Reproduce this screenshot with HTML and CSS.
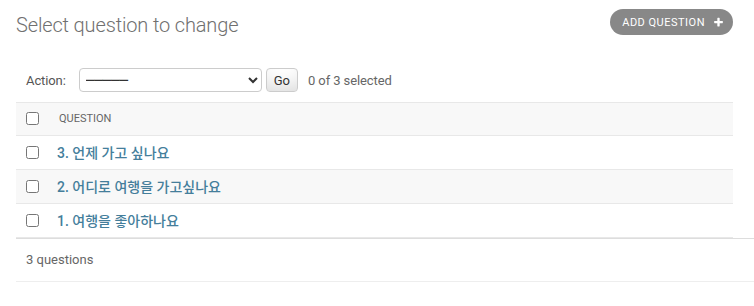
FILE: index.html
```html
<!DOCTYPE html>
<html lang="ko">
<head>
<meta charset="utf-8">
<title>Select question to change</title>
<link rel="stylesheet" href="styles.css">
</head>
<body>
<div class="content">
  <div class="head">
    <h1 class="title">Select question to change</h1>
    <a class="addlink" href="#">Add question
      <svg class="plus" width="11" height="11" viewBox="0 0 1792 1792" aria-hidden="true"><path fill="#fff" d="M1600 736v192q0 40-28 68t-68 28h-416v416q0 40-28 68t-68 28h-192q-40 0-68-28t-28-68v-416h-416q-40 0-68-28t-28-68v-192q0-40 28-68t68-28h416v-416q0-40 28-68t68-28h192q40 0 68 28t28 68v416h416q40 0 68 28t28 68z"/></svg>
    </a>
  </div>
  <div class="actions">
    <label class="action-label">Action:</label>
    <select class="action-select">
      <option>─────</option>
      <option>Delete selected questions</option>
    </select>
    <button class="go" type="button">Go</button>
    <span class="counter">0 of 3 selected</span>
  </div>
  <table class="results">
    <thead>
      <tr>
        <th class="cb-col"><input class="cb" type="checkbox"></th>
        <th class="head-col">Question</th>
      </tr>
    </thead>
    <tbody>
      <tr class="row1">
        <td class="cb-col"><input class="cb" type="checkbox"></td>
        <th class="link-col"><a href="#">3. 언제 가고 싶나요</a></th>
      </tr>
      <tr class="row2">
        <td class="cb-col"><input class="cb" type="checkbox"></td>
        <th class="link-col"><a href="#">2. 어디로 여행을 가고싶나요</a></th>
      </tr>
      <tr class="row1">
        <td class="cb-col"><input class="cb" type="checkbox"></td>
        <th class="link-col"><a href="#">1. 여행을 좋아하나요</a></th>
      </tr>
    </tbody>
  </table>
  <p class="paginator">3 questions</p>
</div>
</body>
</html>
```
FILE: styles.css
```css
html, body {
  margin: 0;
  padding: 0;
  background: #fff;
  overflow: hidden;
}
body {
  font-family: Roboto, "Noto Sans CJK KR", sans-serif;
  color: #333;
  font-size: 14px;
}
.content {
  padding: 13px 21px 0 16px;
}
.head {
  display: flex;
  justify-content: space-between;
  align-items: flex-start;
  margin-bottom: 21px;
}
.title {
  margin: 0;
  font-size: 20px;
  font-weight: 300;
  line-height: 24px;
  letter-spacing: -0.15px;
  color: #707070;
}
.addlink {
  margin-top: -4px;
  display: inline-flex;
  align-items: center;
  gap: 8px;
  height: 26px;
  padding: 0 9px 0 12px;
  box-sizing: border-box;
  background: #888;
  color: #fff;
  border-radius: 15px;
  font-size: 11px;
  font-weight: 400;
  text-transform: uppercase;
  letter-spacing: 0.5px;
  text-decoration: none;
}
.plus {
  display: block;
}
.actions {
  display: flex;
  align-items: center;
  height: 24px;
  padding: 10px;
  color: #666;
  font-size: 13px;
}
.action-label {
  color: #555;
  letter-spacing: -0.1px;
}
.action-select {
  margin-left: 13px;
  width: 183px;
  height: 24px;
  box-sizing: border-box;
  border: 1px solid #ccc;
  border-radius: 4px;
  background: #fff;
  color: #333;
  font-family: "DejaVu Sans", sans-serif;
  font-size: 14px;
  padding: 0 0 0 2px;
}
.go {
  margin-left: 4px;
  height: 24px;
  box-sizing: border-box;
  padding: 0 7px;
  border: 1px solid #ccc;
  border-radius: 4px;
  background: #fff;
  box-shadow: 0 -15px 20px -10px rgba(0, 0, 0, 0.15) inset;
  color: #333;
  font-family: Roboto, sans-serif;
  font-size: 13px;
  line-height: 1;
}
.counter {
  margin-left: 10px;
  letter-spacing: -0.1px;
}
.results {
  width: 100%;
  border-collapse: separate;
  border-spacing: 0;
}
.results thead th {
  background: #f8f8f8;
  border-top: 1px solid #e8e8e8;
  border-bottom: 1px solid #e8e8e8;
  height: 31px;
  padding-bottom: 1px;
  box-sizing: content-box;
  vertical-align: middle;
}
.cb-col {
  width: 13px;
  padding: 0 10px;
  vertical-align: middle;
}
.cb {
  display: block;
  margin: 0;
  width: 13px;
  height: 13px;
}
.head-col {
  padding: 0 10px;
  text-align: left;
  font-size: 11px;
  font-weight: 400;
  color: #666;
  text-transform: uppercase;
}
.results tbody td,
.results tbody th {
  border-bottom: 1px solid #e8e8e8;
  height: 32px;
  padding-bottom: 1px;
  box-sizing: content-box;
  vertical-align: middle;
}
.row2 {
  background: #f8f8f8;
}
.link-col {
  padding: 0 8px;
  text-align: left;
  font-size: 14px;
  font-weight: 500;
}
.link-col a {
  color: #447e9b;
  text-decoration: none;
}
.paginator {
  margin: 0 -21px 0 0;
  padding: 10px 10px;
  font-size: 13px;
  line-height: 22px;
  color: #666;
  border-top: 1px solid #ddd;
  border-bottom: 1px solid #eee;
}
```
